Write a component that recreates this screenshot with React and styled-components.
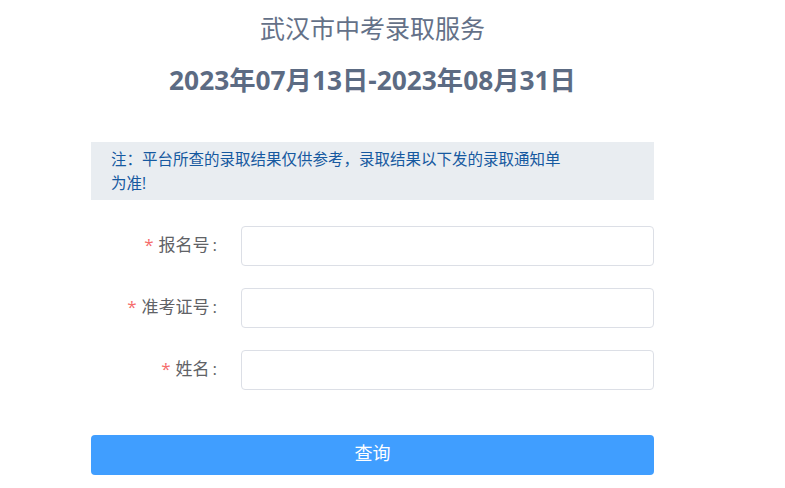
import React from 'react'
import styled, { createGlobalStyle } from 'styled-components'

const Global = createGlobalStyle`
  html, body {
    margin: 0;
    background: #fff;
  }
  body {
    font-family: "Open Sans", "Noto Sans CJK SC", sans-serif;
  }
`

const Page = styled.div`
  width: 563px;
  margin-left: 91px;
  display: flex;
  flex-direction: column;
`

const Title = styled.h2`
  margin: 10px 0 0;
  font-size: 25px;
  line-height: 36px;
  font-weight: 400;
  color: #647188;
  text-align: center;
`

const Period = styled.h3`
  margin: 14px 0 0;
  font-size: 26.3px;
  line-height: 40px;
  font-weight: 700;
  color: #5c6b83;
  text-align: center;
`

const Notice = styled.div`
  margin-top: 42px;
  padding: 5px 20px;
  background: #e9edf1;
  color: #1659a0;
  font-size: 15.5px;
  line-height: 24px;

  p {
    margin: 0;
    max-width: 452px;
  }
`

const Form = styled.form`
  margin-top: 26px;
  display: flex;
  flex-direction: column;
  gap: 22px;
`

const Row = styled.div`
  display: flex;
  align-items: center;
  height: 40px;
`

const Label = styled.label`
  width: 150px;
  box-sizing: border-box;
  padding: 0 24px 5px 0;
  text-align: right;
  font-size: 17px;
  color: #606266;

  &::before {
    content: '*';
    color: #f56c6c;
    margin-right: 5px;
  }

  &::after {
    content: ':';
    margin-left: 3px;
  }
`

const Input = styled.input`
  flex: 1;
  height: 40px;
  box-sizing: border-box;
  border: 1px solid #dcdfe6;
  border-radius: 4px;
  padding: 0 15px;
  font-size: 14px;
  outline: none;
`

const Submit = styled.button`
  margin-top: 45px;
  height: 40px;
  padding: 0 0 6px;
  border: none;
  border-radius: 4px;
  background: #409eff;
  color: #fff;
  font-family: inherit;
  font-size: 18px;
  cursor: pointer;
`

const fields = [
  { name: 'bmh', label: '报名号' },
  { name: 'zkzh', label: '准考证号' },
  { name: 'xm', label: '姓名' },
]

export default () => (
  <Page>
    <Global />
    <Title>武汉市中考录取服务</Title>
    <Period>2023年07月13日-2023年08月31日</Period>
    <Notice>
      <p>注：平台所查的录取结果仅供参考，录取结果以下发的录取通知单为准!</p>
    </Notice>
    <Form>
      {fields.map(f => (
        <Row key={f.name}>
          <Label htmlFor={f.name}>{f.label}</Label>
          <Input id={f.name} name={f.name} type="text" />
        </Row>
      ))}
    </Form>
    <Submit type="button">查询</Submit>
  </Page>
)
